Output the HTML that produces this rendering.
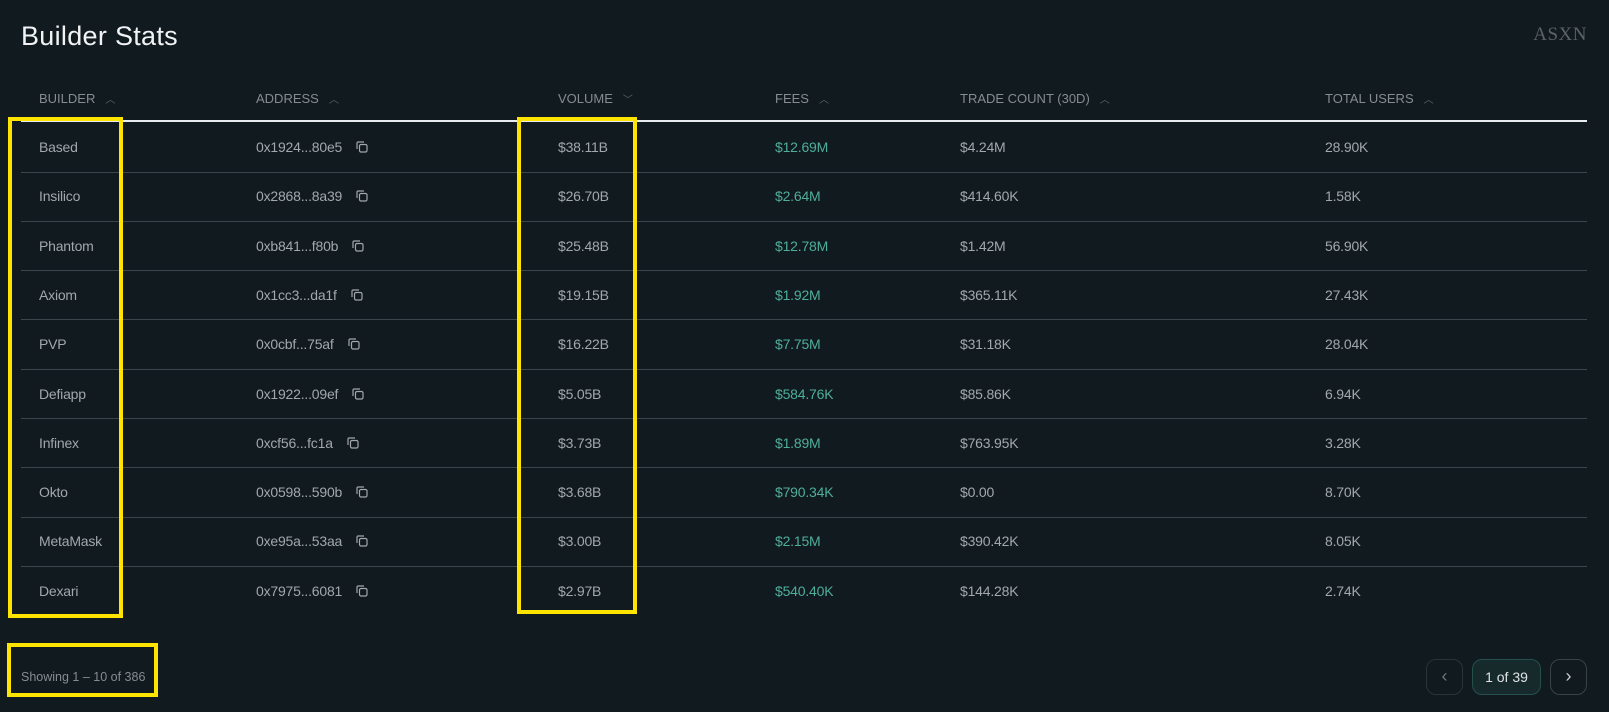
<!DOCTYPE html>
<html><head><meta charset="utf-8"><style>
*{margin:0;padding:0;box-sizing:border-box}
body{width:1609px;height:712px;background:#101a1f;font-family:"Liberation Sans",sans-serif;position:relative;overflow:hidden;color:#9ba1a5}
.a{position:absolute;white-space:nowrap}
.t{left:21px;top:21px;font-size:27px;color:#f0f2f3;letter-spacing:0.3px}
.logo{right:22px;top:24px;font-family:"Liberation Serif",serif;font-size:19px;color:#5b6366;letter-spacing:0.5px}
.h{top:91px;font-size:13px;color:#868d91}
.h span{font-size:10px;color:#5c6468;margin-left:10px}
.line{left:21px;width:1566px;top:120px;height:2px;background:#e8ecee}
.sep{left:21px;width:1566px;height:1px;background:#3a464c}
.c{font-size:14px;color:#a2a8ac;letter-spacing:-0.2px}
.f{color:#4fae98}
.cp{display:inline-block;width:12px;height:12px;margin-left:14px;position:relative;top:1px}
.yb{position:absolute;border:4px solid #ffe400}
.btn{position:absolute;border:1px solid #2b3337;border-radius:10px;width:37px;height:36px;color:#c9cdcf;font-size:18px;text-align:center;line-height:33px}
</style></head><body>
<div class="a t">Builder Stats</div>
<div class="a logo">ASXN</div>
<div class="a h" style="left:39px">BUILDER<span>︿</span></div>
<div class="a h" style="left:256px">ADDRESS<span>︿</span></div>
<div class="a h" style="left:558px">VOLUME<span>﹀</span></div>
<div class="a h" style="left:775px">FEES<span>︿</span></div>
<div class="a h" style="left:960px">TRADE COUNT (30D)<span>︿</span></div>
<div class="a h" style="left:1325px">TOTAL USERS<span>︿</span></div>
<div class="a line"></div>
<div id="rows"></div>
<script>
var d=[["Based","0x1924...80e5","$38.11B","$12.69M","$4.24M","28.90K"],
["Insilico","0x2868...8a39","$26.70B","$2.64M","$414.60K","1.58K"],
["Phantom","0xb841...f80b","$25.48B","$12.78M","$1.42M","56.90K"],
["Axiom","0x1cc3...da1f","$19.15B","$1.92M","$365.11K","27.43K"],
["PVP","0x0cbf...75af","$16.22B","$7.75M","$31.18K","28.04K"],
["Defiapp","0x1922...09ef","$5.05B","$584.76K","$85.86K","6.94K"],
["Infinex","0xcf56...fc1a","$3.73B","$1.89M","$763.95K","3.28K"],
["Okto","0x0598...590b","$3.68B","$790.34K","$0.00","8.70K"],
["MetaMask","0xe95a...53aa","$3.00B","$2.15M","$390.42K","8.05K"],
["Dexari","0x7975...6081","$2.97B","$540.40K","$144.28K","2.74K"]];
var xs=[39,256,558,775,960,1325],h="";
var cp='<svg class="cp" viewBox="0 0 12 12" fill="none" stroke="#a2a8ac" stroke-width="1.2"><rect x="3.5" y="3.5" width="7.5" height="7.5" rx="1.5"/><path d="M1 8V2a1 1 0 0 1 1-1h6"/></svg>';
d.forEach(function(r,i){var y=148+i*49.3-9;
r.forEach(function(v,j){h+='<div class="a c'+(j==3?' f':'')+'" style="left:'+xs[j]+'px;top:'+y+'px">'+v+(j==1?cp:'')+'</div>';});
if(i<9)h+='<div class="a sep" style="top:'+(171.5+i*49.3)+'px"></div>';});
document.getElementById('rows').innerHTML=h;
</script>
<div class="yb" style="left:8px;top:117px;width:115px;height:501px"></div>
<div class="yb" style="left:517px;top:117px;width:120px;height:497px"></div>
<div class="yb" style="left:7px;top:643px;width:151px;height:54px"></div>
<div class="a" style="left:21px;top:670px;font-size:12.5px;color:#868d91">Showing 1 – 10 of 386</div>
<div class="btn" style="left:1426px;top:659px;color:#6d7579">‹</div>
<div class="btn" style="left:1472px;top:659px;width:69px;background:#16292b;border-color:#25504c;font-size:14px;line-height:34px;color:#dfe3e4">1 of 39</div>
<div class="btn" style="left:1550px;top:659px;border-color:#3a4246">›</div>
</body></html>
